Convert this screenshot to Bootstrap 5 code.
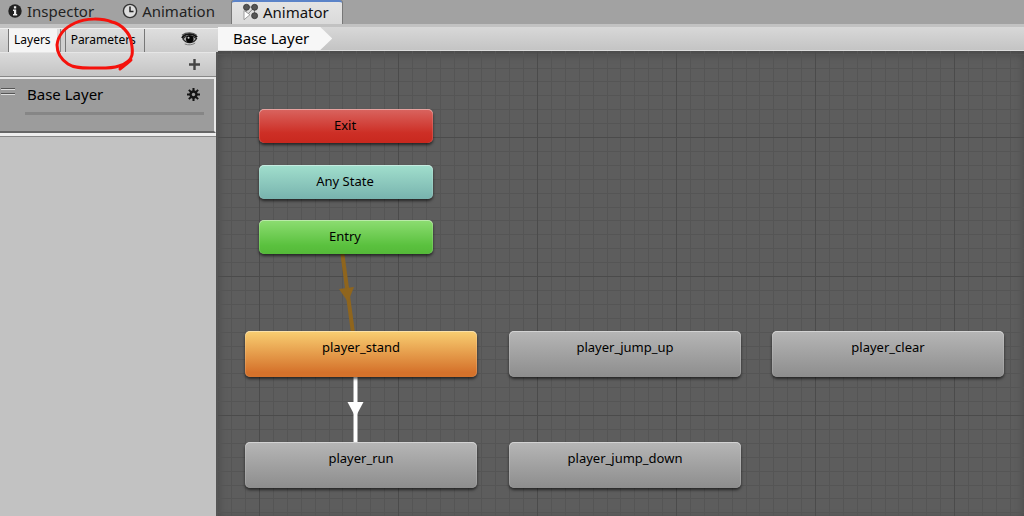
<!DOCTYPE html>
<html lang="en">
<head>
<meta charset="utf-8">
<meta name="viewport" content="width=device-width, initial-scale=1">
<title>Animator</title>
<link href="https://cdn.jsdelivr.net/npm/bootstrap@5.3.0/dist/css/bootstrap.min.css" rel="stylesheet">
<style>
  body { font-family: "Noto Sans", "Open Sans", sans-serif; font-size: 13px; line-height: 20px; color: #000; background: #a2a2a2; }
  button { color: inherit; }
  .window-tabs { height: 24px; background: #a2a2a2; padding-left: 1px; }
  .window-tab { height: 24px; padding: 0 6px 3px; border: 0; border-top: 1px solid transparent; background: none; font-size: 15px; line-height: 20px; color: #222; }
  .window-tab.active { background: linear-gradient(#e4e4e4, #dadada); border-top: 2px solid #5b83c8; border-radius: 3px 3px 0 0; box-shadow: -1px 0 #777, 1px 0 #777; margin-left: 11px; padding: 0 13px 3px 10px; color: #111; }
  .side-panel { width: 218px; background: #c2c2c2; }
  .side-bar-row { height: 24px; background: linear-gradient(#dedede, #cbcbcb); border-top: 1px solid #eee; }
  .side-tab { height: 23px; border: 0; border-left: 1px solid #777; background: none; font-size: 12px; line-height: 20px; padding: 0 6px 1px 5px; }
  .side-tab.active { background: #f5f5f5; }
  .side-tab + .side-tab { border-right: 1px solid #777; padding: 0 8px 1px 5px; box-shadow: -4px 0 #d0d0d0, -5px 0 #888; margin-left: 8px; }
  .icon-btn { border: 0; background: none; padding: 0; display: flex; }
  .layer-area { border-right: 2px solid #555; }
  .layer-tools { height: 25px; background: linear-gradient(#dadada, #c4c4c4); border-top: 1px solid #e6e6e6; border-bottom: 1px solid #888; padding-bottom: 1px; }
  .layer-item { height: 56px; background: #9c9c9c; border-top: 2px solid #e8e8e8; border-right: 2px solid #e8e8e8; border-bottom: 2px solid #666; padding: 5px 10px 0 1px; }
  .layer-end { height: 4px; background: #eee; border-bottom: 1px solid #888; }
  .layer-grip { margin-bottom: 6px; }
  .layer-title { font-size: 15px; }
  .layer-weight { height: 3px; background: #868686; margin: 8px 0 0 24px; }
  .crumbs { height: 27px; background: linear-gradient(#d8d8d8, #c4c4c4); border-top: 3px solid #c2c2c2; border-bottom: 1px solid #ddd; }
  .crumb-shape { background: #f7f7f7; clip-path: polygon(0 0, calc(100% - 12px) 0, 100% 50%, calc(100% - 12px) 100%, 0 100%); padding: 0 23px 0 15px; font-size: 15px; line-height: 23px; color: #000; text-decoration: none; }
  .graph { background: #5d5d5d; box-shadow: inset 0 3px 8px #3338; overflow: hidden; }
  .node { position: absolute; border: 0; border-radius: 5px; box-shadow: inset 0 1px #fff6, inset 1px 0 #fff2, inset -1px 0 #fff2, 0 2px 3px #0009; font-size: 13px; line-height: 20px; text-align: center; }
  .node-small { width: 174px; height: 34px; padding: 0 2px 3px 0; }
  .node-state { width: 232px; height: 46px; padding: 0 0 15px; background: linear-gradient(#b6b6b6, #8d8d8d); }
  .node-exit { background: linear-gradient(#d96560, #cd2f26 70%, #c9281e); }
  .node-any { background: linear-gradient(#a1dfcd, #78b3ae); }
  .node-entry { background: linear-gradient(#8ddd72, #5ac13e 75%, #55b939); }
  .node-default { background: linear-gradient(#f9cf72, #d5722b 90%); }
  .col-a { left: 41px; } .col-b { left: 27px; } .col-c { left: 291px; } .col-d { left: 554px; }
  .row-a { top: 58px; } .row-b { top: 114px; } .row-c { top: 169px; } .row-d { top: 280px; } .row-e { top: 391px; }
  .marker { position: absolute; left: 50px; top: 14px; pointer-events: none; }
</style>
</head>
<body class="vh-100 d-flex flex-column overflow-hidden position-relative">
<nav class="window-tabs d-flex flex-shrink-0" aria-label="Windows">
  <button class="window-tab d-flex align-items-center gap-1" type="button">
    <svg width="16" height="16" viewBox="0 0 16 16"><circle cx="8" cy="8" r="6.7" fill="#222"/><path d="M6.900 3.200h2.300v2.200H6.900zM6 6.500h3.200v4.600h1v1.500H6v-1.500h1V8H6z" fill="#eee"/></svg>
    <span>Inspector</span>
  </button>
  <button class="window-tab d-flex align-items-center gap-1 ms-3" type="button">
    <svg width="16" height="16" viewBox="0 0 16 16"><circle cx="8" cy="8" r="6.600" fill="#ddd" stroke="#333" stroke-width="1.400"/><path d="M8 3.500V8.500h3.500" fill="none" stroke="#222" stroke-width="1.500"/></svg>
    <span>Animation</span>
  </button>
  <button class="window-tab active d-flex align-items-center gap-1" type="button">
    <svg width="17" height="17" viewBox="0 0 17 17"><path d="M4.500 4H12.500V13M12.500 4L6 11M4 4v5" fill="none" stroke="#888"/><g fill="#555" stroke="#333" stroke-width=".8"><circle cx="4.500" cy="4.300" r="3"/><circle cx="12.600" cy="4.300" r="3"/><circle cx="12.600" cy="12.700" r="3"/></g><path d="M2 7.500l6 4.200-6 5z" fill="#fff" stroke="#888" stroke-width=".8"/></svg>
    <span>Animator</span>
  </button>
</nav>
<div class="d-flex flex-grow-1">
  <aside class="side-panel flex-shrink-0 d-flex flex-column">
    <div class="side-bar-row d-flex ps-2 align-items-center mt-1 flex-shrink-0">
      <button class="side-tab active" type="button">Layers</button>
      <button class="side-tab" type="button">Parameters</button>
      <button class="icon-btn ms-auto me-3 pe-1 pb-1" type="button" aria-label="Live link">
        <svg width="17" height="14" viewBox="0 0 18 14"><path d="M1 6C4 1 12 0 17 5" fill="none" stroke="#111" stroke-width="2"/><path d="M1 3C6-.5 13 0 16.500 3" fill="none" stroke="#555" stroke-width="1.200"/><path d="M2 7C5 2.500 12 2.500 16.500 6.500c-3 5.500-10.500 6-14.500.5z" fill="#aaa" stroke="#222" stroke-width="1.300"/><circle cx="9.300" cy="7" r="4" fill="#050505"/><circle cx="8" cy="5.600" r="1.100" fill="#ccc"/><path d="M4 12.300c4 1.500 8 1 11-1" stroke="#777" fill="none"/></svg>
      </button>
    </div>
    <div class="layer-area flex-grow-1">
      <div class="layer-tools d-flex align-items-center justify-content-end">
        <button class="icon-btn me-3" type="button" aria-label="Add layer"><svg width="11" height="11" viewBox="0 0 11 11"><path d="M5.500 0v11M0 5.500h11" stroke="#444" stroke-width="2.400"/></svg></button>
      </div>
      <div class="layer-item">
        <div class="d-flex align-items-center">
          <svg class="layer-grip" width="14" height="9" viewBox="0 0 14 9"><path d="M0 1.500h14M0 6.500h14" stroke="#555"/><path d="M0 2.500h14M0 7.500h14" stroke="#ddd"/></svg>
          <span class="layer-title ms-2 ps-1">Base Layer</span>
          <button class="icon-btn ms-auto me-1" type="button" aria-label="Layer settings"><svg width="13" height="13" viewBox="0 0 14 14"><path d="M7 0v14M0 7h14M2 2l10 10M12 2L2 12" stroke="#151515" stroke-width="2.200"/><circle cx="7" cy="7" r="4.500" fill="#151515"/><circle cx="7" cy="7" r="1.800" fill="#9c9c9c"/></svg></button>
        </div>
        <div class="layer-weight"></div>
      </div>
      <div class="layer-end"></div>
    </div>
  </aside>
  <main class="flex-grow-1 d-flex flex-column">
    <div class="crumbs d-flex flex-shrink-0"><a class="crumb-shape" href="#">Base Layer</a></div>
    <section class="graph flex-grow-1 position-relative" aria-label="State graph">
      <svg class="position-absolute top-0 start-0 w-100 h-100">
        <defs><pattern id="grid" x="41" y="86" width="139" height="139" patternUnits="userSpaceOnUse">
          <path d="M14.500 0v139M28.500 0v139M42.500 0v139M56.500 0v139M70.500 0v139M83.500 0v139M97.500 0v139M111.500 0v139M125.500 0v139M0 14.500h139M0 28.500h139M0 42.500h139M0 56.500h139M0 70.500h139M0 83.500h139M0 97.500h139M0 111.500h139M0 125.500h139" stroke="#555"/>
          <path d="M.5 0v139M0 .5h139" stroke="#4b4b4b"/></pattern></defs>
        <rect width="100%" height="100%" fill="url(#grid)"/>
        <path d="M124 200L135 282" stroke="#8f651d" stroke-width="4"/><path d="M121 238l15-2-6 15z" fill="#8f651d"/>
        <path d="M137.500 320v75" stroke="#fff" stroke-width="4"/><path d="M129.500 351h16l-8 15z" fill="#fff"/>
      </svg>
      <button class="node node-small node-exit col-a row-a" type="button">Exit</button>
      <button class="node node-small node-any col-a row-b" type="button">Any State</button>
      <button class="node node-small node-entry col-a row-c" type="button">Entry</button>
      <button class="node node-state node-default col-b row-d" type="button">player_stand</button>
      <button class="node node-state col-c row-d" type="button">player_jump_up</button>
      <button class="node node-state col-d row-d" type="button">player_clear</button>
      <button class="node node-state col-b row-e" type="button">player_run</button>
      <button class="node node-state col-c row-e" type="button">player_jump_down</button>
    </section>
  </main>
</div>
<svg class="marker" width="90" height="60" viewBox="0 0 90 60" aria-hidden="true"><path d="M81 27C80 20 72 10 62 8 52 4 36 4 25 9 14 14 8 22 7 31c0 8 5 15 11 19 6 4 14 4 22 4 10 0 20 1 29-2 6-2 12-6 13-11 1-5 0-9-1-14M81 46c-3 3-7 6-11 9" fill="none" stroke="#f5120c" stroke-width="3" stroke-linecap="round"/></svg>
<script src="https://cdn.jsdelivr.net/npm/bootstrap@5.3.0/dist/js/bootstrap.bundle.min.js"></script>
</body>
</html>
